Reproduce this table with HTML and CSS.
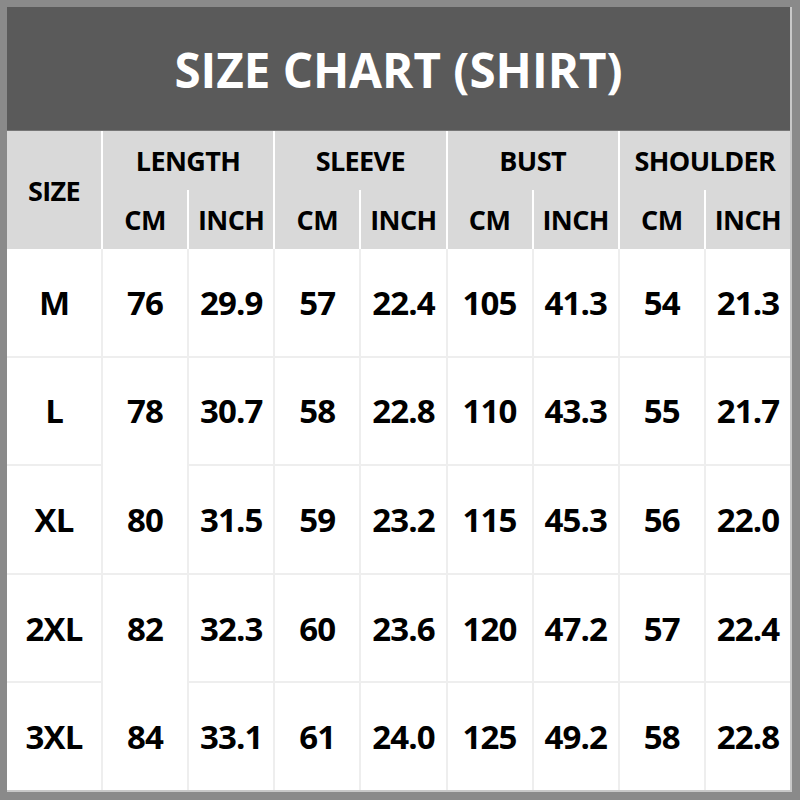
FILE: index.html
```html
<!DOCTYPE html>
<html lang="en">
<head>
<meta charset="utf-8">
<title>Size Chart (Shirt)</title>
<link rel="stylesheet" href="styles.css">
</head>
<body>
<div class="frame">
  <div class="sheet">
    <div class="title">SIZE CHART (SHIRT)</div>
    <div class="head">
      <div class="hcell size-h">SIZE</div>
      <div class="hcell group">LENGTH</div>
      <div class="hcell group">SLEEVE</div>
      <div class="hcell group">BUST</div>
      <div class="hcell group">SHOULDER</div>
      <div class="hcell">CM</div><div class="hcell">INCH</div>
      <div class="hcell">CM</div><div class="hcell">INCH</div>
      <div class="hcell">CM</div><div class="hcell">INCH</div>
      <div class="hcell">CM</div><div class="hcell">INCH</div>
    </div>
    <div class="body">
      <div class="cell">M</div><div class="cell">76</div><div class="cell">29.9</div><div class="cell">57</div><div class="cell">22.4</div><div class="cell">105</div><div class="cell">41.3</div><div class="cell">54</div><div class="cell">21.3</div>
      <div class="cell">L</div><div class="cell">78</div><div class="cell">30.7</div><div class="cell">58</div><div class="cell">22.8</div><div class="cell">110</div><div class="cell">43.3</div><div class="cell">55</div><div class="cell">21.7</div>
      <div class="cell">XL</div><div class="cell joined">80</div><div class="cell">31.5</div><div class="cell">59</div><div class="cell">23.2</div><div class="cell">115</div><div class="cell">45.3</div><div class="cell">56</div><div class="cell">22.0</div>
      <div class="cell">2XL</div><div class="cell">82</div><div class="cell">32.3</div><div class="cell">60</div><div class="cell">23.6</div><div class="cell">120</div><div class="cell">47.2</div><div class="cell">57</div><div class="cell">22.4</div>
      <div class="cell">3XL</div><div class="cell joined">84</div><div class="cell">33.1</div><div class="cell">61</div><div class="cell">24.0</div><div class="cell">125</div><div class="cell">49.2</div><div class="cell">58</div><div class="cell">22.8</div>
    </div>
  </div>
</div>
</body>
</html>
```

FILE: styles.css
```css
html, body {
  margin: 0;
  padding: 0;
}

body {
  font-family: "Open Sans", "DejaVu Sans", sans-serif;
  font-weight: 700;
  color: #000;
}

.frame {
  width: 800px;
  height: 800px;
  box-sizing: border-box;
  padding: 7px 8px 8px 7px;
  background: #8a8a8a;
}

.sheet {
  height: 100%;
  box-sizing: border-box;
  border-right: 2px solid #c8c8c8;
  border-bottom: 2px solid #c8c8c8;
  background: #fff;
  display: flex;
  flex-direction: column;
}

.title {
  height: 124px;
  flex: none;
  background: #5a5a5a;
  color: #fff;
  font-size: 47.5px;
  display: flex;
  align-items: center;
  justify-content: center;
  box-shadow: inset 0 -1px 0 #767676;
}

.head {
  flex: none;
  display: grid;
  grid-template-columns: 94px repeat(8, 1fr);
  grid-template-rows: 59px 59px;
  column-gap: 2px;
  row-gap: 0;
  background: #fff;
}

.hcell {
  background: #d9d9d9;
  display: flex;
  align-items: center;
  justify-content: center;
  font-size: 27px;
  letter-spacing: -0.6px;
}

.size-h {
  grid-row: 1 / span 2;
}

.group {
  grid-column: span 2;
}

.body {
  flex: 1;
  display: grid;
  grid-template-columns: 94px repeat(8, 1fr);
  grid-template-rows: repeat(5, 1fr);
  gap: 2px;
  background: #eeeeee;
}

.cell {
  background: #fff;
  display: flex;
  align-items: center;
  justify-content: center;
  font-size: 33px;
  letter-spacing: -0.9px;
}

.joined {
  margin-top: -2px;
  padding-top: 2px;
}
```
